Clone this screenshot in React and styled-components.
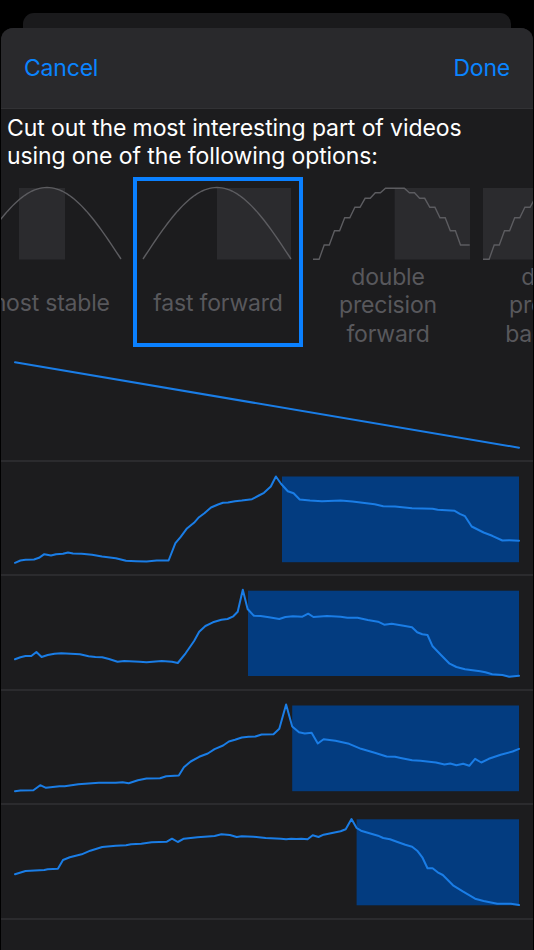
import React from "react";
import styled, { createGlobalStyle } from "styled-components";

const GlobalStyle = createGlobalStyle`
  html, body { margin: 0; padding: 0; background: #000; }
  body { width: 534px; height: 950px; overflow: hidden; font-family: Inter, "Noto Sans", sans-serif; }
  #root { height: 950px; }
`;

const Screen = styled.div`
  height: 950px;
  background: #000;
  padding-top: 13px;
  box-sizing: border-box;
  display: flex;
  flex-direction: column;
`;

const BackCard = styled.div`
  height: 15px;
  margin: 0 23px;
  background: #1a1a1c;
  border-radius: 11px 11px 0 0;
  flex-shrink: 0;
`;

const Sheet = styled.div`
  flex: 1;
  margin: 0 1px;
  background: #1c1c1e;
  border-radius: 12px 12px 0 0;
  overflow: hidden;
  display: flex;
  flex-direction: column;
`;

const Header = styled.div`
  height: 80px;
  flex-shrink: 0;
  background: #29292c;
  border-bottom: 1px solid #323235;
  display: flex;
  align-items: center;
  justify-content: space-between;
  padding: 0 23px 0 23px;
`;

const NavButton = styled.span`
  color: #0a84ff;
  font-size: 23px;
  letter-spacing: -0.2px;
`;

const Intro = styled.p`
  margin: 0;
  padding: 5px 0 0 6px;
  color: #fff;
  font-size: 23px;
  line-height: 28px;
  letter-spacing: -0.1px;
`;

const Carousel = styled.div`
  display: flex;
  margin-top: 7px;
  margin-left: -38px;
  flex-shrink: 0;
`;

const Option = styled.div`
  width: 170px;
  height: 170px;
  flex-shrink: 0;
  box-sizing: border-box;
  border: 4px solid ${(p) => (p.$selected ? "#0a80ff" : "transparent")};
  padding: 6px 0 0 6px;
  display: flex;
  flex-direction: column;
`;

const Thumb = styled.svg`
  display: block;
  overflow: visible;
  flex-shrink: 0;
`;

const LabelBox = styled.div`
  flex: 1;
  margin-left: -6px;
  padding-top: 3px;
  display: flex;
  align-items: center;
  justify-content: center;
`;

const Label = styled.div`
  max-width: 140px;
  text-align: center;
  color: #58585c;
  font-size: 23px;
  line-height: 28.5px;
  letter-spacing: -0.2px;
`;

const ChartRow = styled.div`
  height: 114.5px;
  box-sizing: border-box;
  border-bottom: 2px solid #2b2b2e;
  flex-shrink: 0;
`;

const ChartSvg = styled.svg`
  display: block;
  width: 532px;
  height: 112.5px;
`;

const BLUE_LINE = "#1a7de6";
const BLUE_FILL = "#033c80";

function smoothPath(w, h) {
  const pts = [];
  for (let i = 0; i <= 60; i++) {
    const x = (w * i) / 60;
    const y = h - (h - 0.5) * Math.sin((Math.PI * i) / 60);
    pts.push(`${x.toFixed(2)},${y.toFixed(2)}`);
  }
  return "M" + pts.join(" L");
}

const stepUp =
  "0,72.3 6.1,72.3 11.2,58 16.3,58 21.5,43.7 26.6,43.7 31.7,30.7 36.8,30.7 41.9,20.3 47,20.3 52.1,11.3 57.2,11.3 62.3,5.7 67.4,5.7 72.5,1.3 91.3,1.3 96.4,5.7 101.5,5.7 106.6,11.3 111.7,11.3 116.8,20.3 121.9,20.3 127,30.7 132.2,30.7 137.3,43.7 142.4,43.7 147.5,58 156.7,58";

const options = [
  { label: "most stable", kind: "smooth", rect: [46 / 148, 46 / 148] },
  { label: "fast forward", kind: "smooth", rect: [0.5, 0.5], selected: true },
  { label: "double precision forward", kind: "step", rect: [0.52, 0.48] },
  { label: "double precision backward", kind: "step", rect: [0, 0.5] },
];

function Thumbnail({ kind, rect }) {
  const w = kind === "smooth" ? 148 : 157;
  const h = 72.5;
  return (
    <Thumb width={w} height={h} viewBox={`0 0 ${w} ${h}`}>
      <rect x={rect[0] * w} y={1} width={rect[1] * w} height={h - 1} fill="#2b2b2e" />
      {kind === "smooth" ? (
        <path d={smoothPath(w, 72)} fill="none" stroke="#5c5c60" strokeWidth="1.4" />
      ) : (
        <polyline points={stepUp} fill="none" stroke="#5c5c60" strokeWidth="1.4" />
      )}
    </Thumb>
  );
}

const charts = [
  {
    line: "15,362.3 519,447.7",
  },
  {
    rect: [282, 476, 237, 85.7],
    line: "15,562.3 20.4,560 25.5,559.3 34,559 39,557.3 44.3,553.7 51,555 56,553.7 63,553.3 68,552 73,553 81.7,553.3 92,554.3 102,556 115.8,557.7 126,560.3 136,560.7 146.5,561 156.7,560 168.6,560 175.4,542.7 180.5,536.7 186.6,528.3 194,522.3 199,516.7 204.4,512.7 211,507 218,504 223,502.3 228,502 235,500.7 241.8,500 252,498.7 258.9,495 264,492.3 270.8,486 275.9,476 281,483.3 287.8,490.7 293.6,492.7 299.7,499 310,500 321.9,500.7 340.6,500 352.5,501 374.7,503.7 383.2,505.7 395,506 412,507.7 432.6,508.3 437.7,509.3 454.7,510.3 459.8,513.3 465,515.7 471.7,526 483.6,532 492.2,535.3 502.4,540 509.2,539.7 519,540.3",
  },
  {
    rect: [248, 590.7, 271, 85.3],
    line: "15,659.3 20.4,657.3 25.5,656 31.3,656 36.4,652 41.6,657 47.7,655 54.5,653.7 61.3,653.3 80,654.3 88.6,656.3 95.4,657 102.2,657.3 109,659 117.5,661.7 124.3,661 139.6,661.7 146.5,662.3 161.8,661 172,661.7 177.8,663 185.6,653.3 194.1,641 199.2,631.7 205.4,626 212.9,622.3 221.4,619.7 227.5,619 233.3,616.3 237.7,611.7 242.8,589.7 247.6,609 253.7,615.7 260.6,616 269,617.3 279.3,619 285.4,617 292.9,616.3 302.4,616.7 308.2,613.7 313.4,617 327,616 340.6,616.7 347.4,617.7 357.6,617.7 367.8,620 378,621.7 384.2,624.7 391.7,623.7 403.6,625.7 412,627.3 417.2,632.3 422.3,634.3 427.5,635 432.6,646.3 441,655 449.6,663.7 456.4,667 465,669.3 480.2,671.3 485.4,672.3 492.2,674.3 502.4,675 509.2,676.7 519,675.7",
  },
  {
    rect: [292.2, 705, 226.8, 85.7],
    line: "15,790.7 20.4,790 33.4,789.7 40.2,784.7 46,787.3 59.6,785.7 64.7,785.7 78.3,783.7 98.8,782.3 115.8,782.3 122.6,781.7 128.7,782.7 137.9,779.7 146.5,778 160,777.7 166.2,775.7 178.8,775 183.9,766.7 190.7,761 199.2,756.3 207.8,753 214.6,748.7 223.1,745 228.9,741 235,739.3 241.8,737 248.6,736.3 255.4,736 261.6,734 273.5,733.7 279.3,728.3 286.1,704 292.2,726 299,731.7 304.8,733 311.6,732.3 317.8,743 323.6,738.7 335.5,740.3 349.1,743.3 361,748.3 374.7,752.3 386.6,756 395,756.3 401.9,757.7 412.1,759.7 420.6,760.3 429.2,761.3 436,762 444.5,764 450.3,763 456.4,764.7 463.2,763.3 469.3,765.3 475.1,758.3 481.3,762 488.8,758.3 500.7,754.3 512.6,751 519,748.3",
  },
  {
    rect: [356.6, 819.3, 162.4, 86],
    line: "15,874.3 25.5,871 44.3,870 47.7,869.3 57.9,868.7 63,860 69.8,857.3 81.7,854.3 90.3,850.7 102.2,847 115.8,845.7 126,845.3 131.1,844.3 141.3,843.7 151.6,842.3 166.9,841.7 172,838.7 177.8,842 183.9,838.7 197.5,837.3 214.6,836 221.4,834.3 229.9,835 236.7,837 241.8,836.3 253.7,836.7 265.7,838 281,838.7 286.1,839.3 291.2,838.7 296.3,839 301.4,838.7 307.6,839.3 312.7,835.3 318.5,837 323.6,834.7 332.1,833 340.6,831.3 345.7,829.3 351.5,819 356.6,828 361,830.7 369.5,833.3 378,835.7 383.2,838 390,839.3 396.8,841.7 405.3,844.7 412.1,846.7 417.2,850.7 422.3,857.3 427.5,868.3 432.6,868.3 437.7,872.3 442.8,875 453,885.3 463.2,891.7 475.1,898.7 483.6,901 497.3,903.7 510.9,903.7 519,905",
  },
];

const FIRST_ROW_TOP = 347;
const ROW_STEP = 114.5;

function Chart({ data, index }) {
  const top = FIRST_ROW_TOP + index * ROW_STEP;
  return (
    <ChartRow>
      <ChartSvg viewBox={`1 ${top} 532 112.5`}>
        {data.rect && (
          <rect x={data.rect[0]} y={data.rect[1]} width={data.rect[2]} height={data.rect[3]} fill={BLUE_FILL} />
        )}
        <polyline
          points={data.line}
          fill="none"
          stroke={BLUE_LINE}
          strokeWidth="2"
          strokeLinejoin="round"
          strokeLinecap="round"
        />
      </ChartSvg>
    </ChartRow>
  );
}

export default function App() {
  return (
    <>
      <GlobalStyle />
      <Screen>
        <BackCard />
        <Sheet>
          <Header>
            <NavButton>Cancel</NavButton>
            <NavButton>Done</NavButton>
          </Header>
          <Intro>
            Cut out the most interesting part of videos
            <br />
            using one of the following options:
          </Intro>
          <Carousel>
            {options.map((o) => (
              <Option key={o.label} $selected={o.selected}>
                <Thumbnail kind={o.kind} rect={o.rect} />
                <LabelBox>
                  <Label>{o.label}</Label>
                </LabelBox>
              </Option>
            ))}
          </Carousel>
          {charts.map((c, i) => (
            <Chart key={i} data={c} index={i} />
          ))}
        </Sheet>
      </Screen>
    </>
  );
}
